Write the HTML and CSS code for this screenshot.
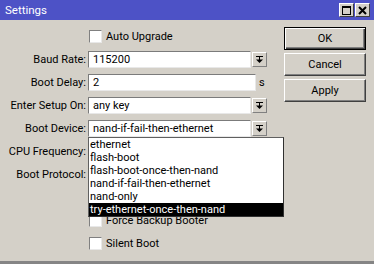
FILE: index.html
```html
<!DOCTYPE html>
<html lang="en">
<head>
    <meta charset="UTF-8">
    <title>Settings</title>
    <link rel="stylesheet" href="styles.css">
</head>
<body>
    <div class="titlebar">
        <span class="title">Settings</span>
        <div class="win-btns">
            <div class="win-btn">
                <svg width="9" height="9" viewBox="0 0 9 9"><rect x="0.5" y="0.5" width="8" height="8" fill="none" stroke="#000"/><rect x="0" y="0" width="9" height="2" fill="#000"/></svg>
            </div>
            <div class="win-btn">
                <svg width="9" height="9" viewBox="0 0 9 9"><path d="M1 1 L8 8 M8 1 L1 8" stroke="#000" stroke-width="2"/></svg>
            </div>
        </div>
    </div>

    <div class="main">
        <div class="form">
            <div class="row check-row">
                <span class="checkbox"></span>
                <span>Auto Upgrade</span>
            </div>
            <div class="row">
                <label class="label">Baud Rate:</label>
                <div class="field">
                    <div class="input select">115200</div>
                    <div class="drop-btn">
                        <svg width="7" height="7" viewBox="0 0 7 7"><rect x="0" y="0" width="7" height="1" fill="#000"/><rect x="3" y="1" width="1" height="3" fill="#000"/><path d="M0 3.5 H7 L3.5 7 Z" fill="#000"/></svg>
                    </div>
                </div>
            </div>
            <div class="row">
                <label class="label">Boot Delay:</label>
                <div class="field">
                    <div class="input delay">2</div>
                    <span class="unit">s</span>
                </div>
            </div>
            <div class="row">
                <label class="label">Enter Setup On:</label>
                <div class="field">
                    <div class="input select">any key</div>
                    <div class="drop-btn">
                        <svg width="7" height="7" viewBox="0 0 7 7"><rect x="0" y="0" width="7" height="1" fill="#000"/><rect x="3" y="1" width="1" height="3" fill="#000"/><path d="M0 3.5 H7 L3.5 7 Z" fill="#000"/></svg>
                    </div>
                </div>
            </div>
            <div class="row">
                <label class="label">Boot Device:</label>
                <div class="field open">
                    <div class="input select">nand-if-fail-then-ethernet</div>
                    <div class="drop-btn">
                        <svg width="7" height="7" viewBox="0 0 7 7"><rect x="0" y="0" width="7" height="1" fill="#000"/><rect x="3" y="1" width="1" height="3" fill="#000"/><path d="M0 3.5 H7 L3.5 7 Z" fill="#000"/></svg>
                    </div>
                    <ul class="dropdown">
                        <li>ethernet</li>
                        <li>flash-boot</li>
                        <li>flash-boot-once-then-nand</li>
                        <li>nand-if-fail-then-ethernet</li>
                        <li>nand-only</li>
                        <li class="selected">try-ethernet-once-then-nand</li>
                    </ul>
                </div>
            </div>
            <div class="row">
                <label class="label">CPU Frequency:</label>
                <div class="field">
                    <div class="input select"></div>
                </div>
            </div>
            <div class="row">
                <label class="label">Boot Protocol:</label>
                <div class="field">
                    <div class="input select"></div>
                </div>
            </div>
            <div class="row check-row">
                <span class="checkbox"></span>
            </div>
            <div class="row check-row">
                <span class="checkbox"></span>
                <span>Force Backup Booter</span>
            </div>
            <div class="row check-row">
                <span class="checkbox"></span>
                <span>Silent Boot</span>
            </div>
        </div>

        <div class="actions">
            <button class="btn default">OK</button>
            <button class="btn">Cancel</button>
            <button class="btn">Apply</button>
        </div>
    </div>

    <div class="statusbar"></div>
</body>
</html>
```

FILE: styles.css
```css
* {
    margin: 0;
    padding: 0;
    box-sizing: border-box;
}

body {
    width: 374px;
    height: 264px;
    overflow: hidden;
    display: flex;
    flex-direction: column;
    background: #d4d0c8;
    color: #000;
    font-family: Roboto, 'Liberation Sans', sans-serif;
    font-size: 11px;
}

.titlebar {
    height: 20px;
    display: flex;
    align-items: center;
    justify-content: space-between;
    padding: 0 4px 0 5px;
    background: #4d52c6;
    color: #fff;
}

.title {
    font-size: 11.5px;
}

.win-btns {
    display: flex;
    gap: 1px;
}

.win-btn {
    width: 15px;
    height: 14px;
    display: flex;
    align-items: center;
    justify-content: center;
    background: #d4d0c8;
    border: 1px solid;
    border-color: #fff #404040 #404040 #fff;
}

.main {
    flex: 1;
    display: flex;
}

.form {
    width: 284px;
    padding-top: 8px;
    display: flex;
    flex-direction: column;
    gap: 6px;
}

.row {
    height: 17px;
    flex-shrink: 0;
    display: flex;
    align-items: center;
}

.label {
    width: 88px;
    padding-right: 2px;
    text-align: right;
    white-space: nowrap;
}

.field {
    position: relative;
    display: flex;
    align-items: center;
    height: 17px;
}

.input {
    height: 17px;
    line-height: 15px;
    padding-left: 4px;
    background: #fff;
    border: 1px solid;
    border-color: #7b7b7b #e8e8e8 #e8e8e8 #7b7b7b;
    white-space: nowrap;
    overflow: hidden;
}

.input.select {
    width: 163px;
}

.input.delay {
    width: 168px;
}

.unit {
    margin-left: 3px;
}

.drop-btn {
    width: 15px;
    height: 15px;
    margin-left: 1px;
    display: flex;
    align-items: center;
    justify-content: center;
    background: #d4d0c8;
    border: 1px solid;
    border-color: #fff #808080 #808080 #fff;
}

.dropdown {
    position: absolute;
    left: 0;
    top: 17px;
    width: 196px;
    list-style: none;
    background: #fff;
    border: 1px solid;
    border-color: #606060 #303030 #303030 #606060;
    z-index: 2;
}

.dropdown li {
    height: 13px;
    line-height: 13px;
    padding-left: 1px;
    white-space: nowrap;
}

.dropdown li.selected {
    background: #000;
    color: #fff;
}

.check-row {
    padding-left: 89px;
    gap: 4px;
}

.checkbox {
    width: 13px;
    height: 13px;
    background: #fff;
    border: 1px solid;
    border-color: #808080 #e8e8e8 #e8e8e8 #808080;
}

.actions {
    width: 82px;
    padding-top: 7px;
    display: flex;
    flex-direction: column;
    gap: 3px;
}

.btn {
    height: 23px;
    background: #d4d0c8;
    border: 1px solid;
    border-color: #fff #404040 #404040 #fff;
    box-shadow: inset -1px -1px 0 #808080;
    font-family: Roboto, 'Liberation Sans', sans-serif;
    font-size: 11px;
    color: #000;
}

.btn.default {
    border: 1px solid #000;
    box-shadow: inset 1px 1px 0 #fff, inset -1px -1px 0 #404040, inset -2px -2px 0 #808080;
}

.statusbar {
    height: 3px;
    background: #858585;
}
```
